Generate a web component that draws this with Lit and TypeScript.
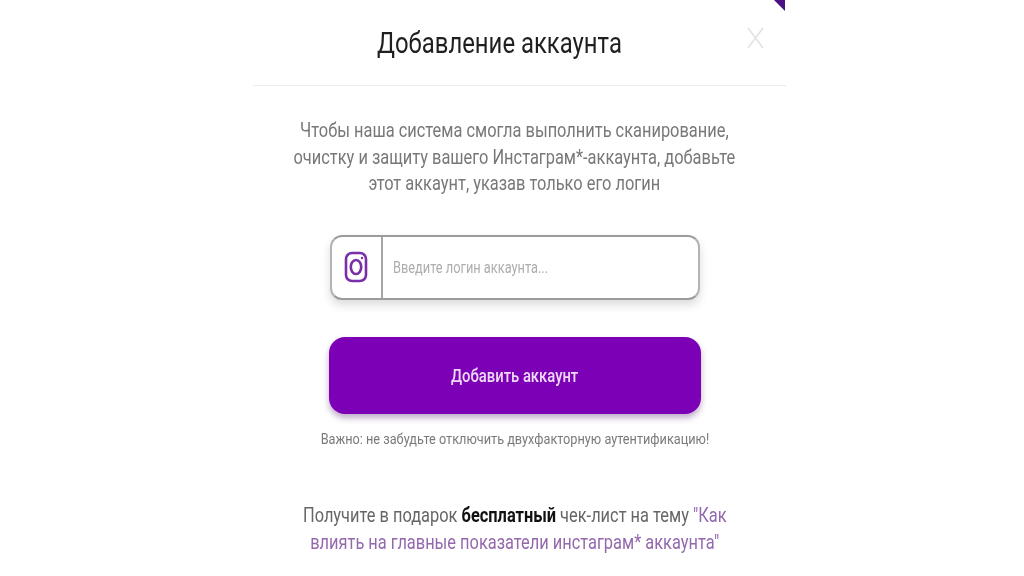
import { LitElement, html, css } from "lit";
import { customElement } from "lit/decorators.js";

@customElement("app-root")
export class AppRoot extends LitElement {
  static styles = css`
    :host {
      display: block;
      width: 1024px;
      height: 576px;
      overflow: hidden;
      background: #fff;
      font-family: Roboto, "Liberation Sans", sans-serif;
    }
    .modal {
      position: relative;
      width: 533px;
      height: 576px;
      margin-left: 253px;
      display: flex;
      flex-direction: column;
      filter: blur(0.6px);
    }
    .corner {
      position: absolute;
      top: 0;
      right: 1px;
      width: 11px;
      height: 11px;
      background: #4b0f86;
      clip-path: polygon(0 0, 100% 0, 100% 100%);
    }
    .header {
      height: 86px;
      flex: none;
      box-sizing: border-box;
      border-bottom: 1.5px solid #ececec;
      display: flex;
      align-items: center;
      padding-left: 124px;
      padding-right: 22px;
      justify-content: space-between;
    }
    .title {
      font-size: 29px;
      line-height: 34px;
      color: #1f1f1f;
      font-weight: 400;
      white-space: nowrap;
      margin: 0;
      transform: scaleX(0.823);
      transform-origin: left center;
      width: 245px;
    }
    .close {
      width: 17px;
      height: 24px;
      display: block;
      margin-top: -9px;
    }
    .body {
      display: flex;
      flex-direction: column;
      align-items: center;
      width: 523px;
      padding-top: 31px;
    }
    .intro {
      margin: 0;
      font-size: 20px;
      line-height: 26.5px;
      color: #787878;
      text-align: center;
      white-space: nowrap;
      transform: scaleX(0.82);
    }
    .field {
      box-sizing: border-box;
      width: 370px;
      height: 65px;
      margin-top: 38px;
      border: 2px solid #9c9c9c;
      border-left-color: #b4b4b4;
      border-right-color: #b4b4b4;
      border-radius: 12px;
      background: #fff;
      box-shadow: 0 5px 10px rgba(0, 0, 0, 0.14);
      display: flex;
      align-items: center;
    }
    .ig {
      width: 51px;
      height: 100%;
      flex: none;
      display: flex;
      align-items: center;
      justify-content: center;
      border-right: 2px solid #a6a6a6;
      box-sizing: border-box;
    }
    .placeholder {
      font-size: 16px;
      color: #adadad;
      margin-left: 10px;
      white-space: nowrap;
      transform: scaleX(0.8);
      transform-origin: left center;
    }
    .btn {
      box-sizing: border-box;
      width: 372px;
      height: 77px;
      margin-top: 37px;
      border-radius: 16px;
      background: #7c00b5;
      color: #f0d9f7;
      box-shadow: 0 4px 6px rgba(70, 20, 100, 0.35);
      font-size: 19px;
      font-weight: 500;
      display: flex;
      align-items: center;
      justify-content: center;
    }
    .btn span {
      transform: scaleX(0.78);
      white-space: nowrap;
    }
    .note {
      margin: 15px 0 0;
      font-size: 15.5px;
      line-height: 20px;
      color: #7a7a7a;
      white-space: nowrap;
      transform: scaleX(0.82);
    }
    .gift {
      margin: 53px 0 0;
      font-size: 20.5px;
      line-height: 27px;
      color: #666;
      text-align: center;
      white-space: nowrap;
      transform: scaleX(0.8);
    }
    .gift b {
      color: #111;
      font-weight: 700;
    }
    .gift a {
      color: #9468ad;
      text-decoration: none;
    }
  `;

  render() {
    return html`
      <div class="modal">
        <div class="corner"></div>
        <div class="header">
          <h1 class="title">Добавление аккаунта</h1>
          <svg class="close" viewBox="0 0 17 24" fill="none" stroke="#e2e2e2" stroke-width="1.6">
            <path d="M1 2 L16 22 M16 2 L1 22"></path>
          </svg>
        </div>
        <div class="body">
          <p class="intro">
            Чтобы наша система смогла выполнить сканирование,<br />
            очистку и защиту вашего Инстаграм*-аккаунта, добавьте<br />
            этот аккаунт, указав только его логин
          </p>
          <div class="field">
            <div class="ig">
              <svg width="24" height="32" viewBox="0 0 24 32" fill="none" stroke="#7a2fa8" stroke-width="2.6">
                <rect x="2" y="2" width="20" height="28" rx="6"></rect>
                <ellipse cx="12" cy="16" rx="5.2" ry="7"></ellipse>
                <circle cx="18" cy="7" r="1.2" fill="#7a2fa8" stroke="none"></circle>
              </svg>
            </div>
            <span class="placeholder">Введите логин аккаунта...</span>
          </div>
          <div class="btn"><span>Добавить аккаунт</span></div>
          <p class="note">Важно: не забудьте отключить двухфакторную аутентификацию!</p>
          <p class="gift">
            Получите в подарок <b>бесплатный</b> чек-лист на тему <a>"Как<br />
            влиять на главные показатели инстаграм* аккаунта"</a>
          </p>
        </div>
      </div>
    `;
  }
}
